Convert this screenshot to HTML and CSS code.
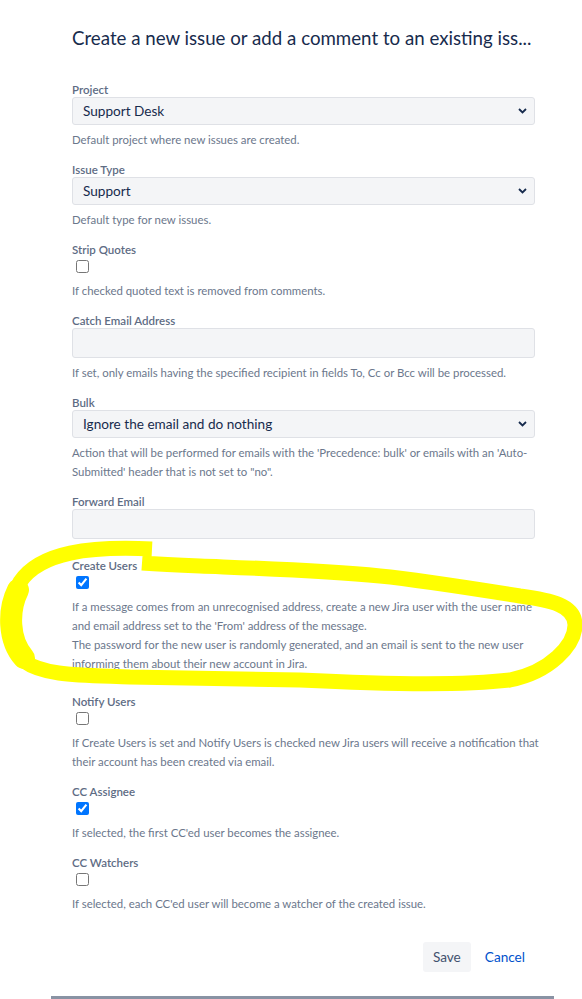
FILE: index.html
```html
<!DOCTYPE html>
<html lang="en">
<head>
<meta charset="utf-8">
<title>Mail handler</title>
<link rel="stylesheet" href="styles.css">
</head>
<body>
<div class="dialog">
  <h2 class="title">Create a new issue or add a comment to an existing iss...</h2>

  <div class="field">
    <div class="label">Project</div>
    <div class="select"><span>Support Desk</span><svg class="chev" width="9" height="6" viewBox="0 0 9 6"><polyline points="1,1 4.5,4.5 8,1" fill="none" stroke="#172b4d" stroke-width="1.8"/></svg></div>
    <div class="desc">Default project where new issues are created.</div>
  </div>

  <div class="field">
    <div class="label">Issue Type</div>
    <div class="select"><span>Support</span><svg class="chev" width="9" height="6" viewBox="0 0 9 6"><polyline points="1,1 4.5,4.5 8,1" fill="none" stroke="#172b4d" stroke-width="1.8"/></svg></div>
    <div class="desc">Default type for new issues.</div>
  </div>

  <div class="field">
    <div class="label">Strip Quotes</div>
    <div class="check"><input type="checkbox"></div>
    <div class="desc">If checked quoted text is removed from comments.</div>
  </div>

  <div class="field">
    <div class="label">Catch Email Address</div>
    <div class="input"></div>
    <div class="desc">If set, only emails having the specified recipient in fields To, Cc or Bcc will be processed.</div>
  </div>

  <div class="field">
    <div class="label">Bulk</div>
    <div class="select"><span>Ignore the email and do nothing</span><svg class="chev" width="9" height="6" viewBox="0 0 9 6"><polyline points="1,1 4.5,4.5 8,1" fill="none" stroke="#172b4d" stroke-width="1.8"/></svg></div>
    <div class="desc">Action that will be performed for emails with the 'Precedence: bulk' or emails with an 'Auto-<br>Submitted' header that is not set to "no".</div>
  </div>

  <div class="field field-forward">
    <div class="label">Forward Email</div>
    <div class="input"></div>
  </div>

  <div class="field field-wide">
    <div class="label">Create Users</div>
    <div class="check"><input type="checkbox" checked></div>
    <div class="desc">If a message comes from an unrecognised address, create a new Jira user with the user name<br>and email address set to the 'From' address of the message.<br>The password for the new user is randomly generated, and an email is sent to the new user<br>informing them about their new account in Jira.</div>
  </div>

  <div class="field">
    <div class="label">Notify Users</div>
    <div class="check"><input type="checkbox"></div>
    <div class="desc">If Create Users is set and Notify Users is checked new Jira users will receive a notification that<br>their account has been created via email.</div>
  </div>

  <div class="field">
    <div class="label">CC Assignee</div>
    <div class="check"><input type="checkbox" checked></div>
    <div class="desc">If selected, the first CC'ed user becomes the assignee.</div>
  </div>

  <div class="field">
    <div class="label">CC Watchers</div>
    <div class="check"><input type="checkbox"></div>
    <div class="desc">If selected, each CC'ed user will become a watcher of the created issue.</div>
  </div>

  <div class="buttons">
    <button class="btn">Save</button>
    <a class="cancel" href="#">Cancel</a>
  </div>
  <div class="footer-bar"></div>
</div>

<svg class="marker" width="582" height="999" viewBox="0 0 582 999">
  <path d="M152,549 C90,546 40,552 20,582 C4,608 4,642 24,661 C44,676 80,675 130,677 L300,680 C380,684 460,686 510,680 C550,672 575,645 575,625 C575,605 550,600 520,596 C470,588 420,580 380,576 C320,570 250,568 200,566 C175,565 156,564 142,563" fill="none" stroke="#ffff00" stroke-width="15" stroke-linecap="butt" stroke-linejoin="round"/>
  <path d="M18,590 C8,610 8,640 24,658" fill="none" stroke="#ffff00" stroke-width="22" stroke-linecap="round"/>
</svg>
</body>
</html>
```

FILE: styles.css
```css
html, body {
  margin: 0;
  padding: 0;
  background: #ffffff;
}
body {
  font-family: Lato, "Open Sans", "Liberation Sans", sans-serif;
  color: #172b4d;
  position: relative;
  width: 582px;
  height: 999px;
  overflow: hidden;
}
.dialog {
  margin-left: 51px;
  width: 503px;
  padding: 24px 19px 0 21px;
  box-sizing: border-box;
}
.title {
  margin: 0 0 31px 0;
  font-size: 18.7px;
  font-weight: 400;
  line-height: 28px;
  white-space: nowrap;
  color: #172b4d;
}
.field {
  margin-bottom: 14px;
}
.field-forward {
  margin-bottom: 20px;
}
.field-wide {
  margin-bottom: 22px;
}
.label {
  font-size: 11.5px;
  font-weight: 600;
  line-height: 14px;
  color: #5e6c84;
}
.select, .input {
  box-sizing: border-box;
  height: 28px;
  background: #f4f5f7;
  border: 1px solid #dfe1e6;
  border-radius: 3px;
  display: flex;
  align-items: center;
  justify-content: space-between;
  padding: 0 7px 0 10px;
  font-size: 13.6px;
  color: #172b4d;
}
.input {
  height: 30px;
}
.chev {
  display: block;
}
.check {
  display: flex;
  align-items: flex-start;
  height: 19px;
}
.check input {
  width: 13px;
  height: 13px;
  margin: 3px 3px 3px 4px;
}
.desc {
  margin-top: 5px;
  font-size: 11.4px;
  line-height: 19px;
  color: #6b778c;
  white-space: nowrap;
}
.buttons {
  display: flex;
  justify-content: flex-end;
  align-items: center;
  gap: 4px;
  margin-top: 29px;
}
.btn {
  height: 30px;
  padding: 0 10px;
  border: none;
  border-radius: 3px;
  background: #f4f5f7;
  color: #42526e;
  font-family: inherit;
  font-size: 13.6px;
}
.cancel {
  padding: 0 10px;
  font-size: 13.6px;
  color: #0052cc;
  text-decoration: none;
  line-height: 30px;
}
.footer-bar {
  height: 3px;
  background: #8993a4;
  margin-top: 24px;
  margin-left: -21px;
  margin-right: -19px;
}
.marker {
  position: absolute;
  left: 0;
  top: 0;
  pointer-events: none;
}
```
